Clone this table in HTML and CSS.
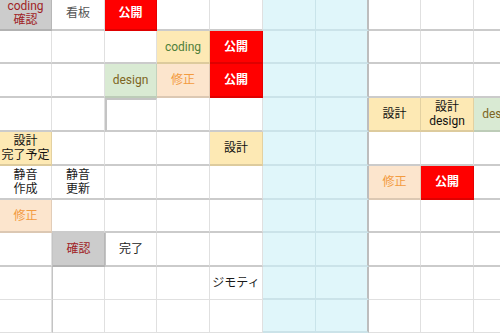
FILE: index.html
```html
<!DOCTYPE html>
<html>
<head>
<meta charset="utf-8">
<link rel="stylesheet" href="styles.css">
</head>
<body>
<div class="sheet">
  <!-- row 0 -->
  <div class="cell c gray red-t">coding<br>確認</div>
  <div class="cell t-gray">看板</div>
  <div class="cell c red">公開</div>
  <div class="cell"></div>
  <div class="cell"></div>
  <div class="cell cy"></div>
  <div class="cell cy cy-end"></div>
  <div class="cell"></div>
  <div class="cell"></div>
  <div class="cell"></div>
  <!-- row 1 -->
  <div class="cell"></div>
  <div class="cell"></div>
  <div class="cell"></div>
  <div class="cell c yellow t-green">coding</div>
  <div class="cell c red">公開</div>
  <div class="cell cy"></div>
  <div class="cell cy cy-end"></div>
  <div class="cell"></div>
  <div class="cell"></div>
  <div class="cell"></div>
  <!-- row 2 -->
  <div class="cell"></div>
  <div class="cell"></div>
  <div class="cell c green t-olive">design</div>
  <div class="cell c peach t-orange">修正</div>
  <div class="cell c red">公開</div>
  <div class="cell cy"></div>
  <div class="cell cy cy-end"></div>
  <div class="cell"></div>
  <div class="cell"></div>
  <div class="cell"></div>
  <!-- row 3 -->
  <div class="cell"></div>
  <div class="cell"></div>
  <div class="cell boxed"></div>
  <div class="cell"></div>
  <div class="cell"></div>
  <div class="cell cy"></div>
  <div class="cell cy cy-end"></div>
  <div class="cell c yellow">設計</div>
  <div class="cell c yellow">設計<br>design</div>
  <div class="cell c green t-olive">design</div>
  <!-- row 4 -->
  <div class="cell c yellow">設計<br>完了予定</div>
  <div class="cell"></div>
  <div class="cell"></div>
  <div class="cell"></div>
  <div class="cell c yellow">設計</div>
  <div class="cell cy"></div>
  <div class="cell cy cy-end"></div>
  <div class="cell"></div>
  <div class="cell"></div>
  <div class="cell"></div>
  <!-- row 5 -->
  <div class="cell">静音<br>作成</div>
  <div class="cell">静音<br>更新</div>
  <div class="cell"></div>
  <div class="cell"></div>
  <div class="cell"></div>
  <div class="cell cy"></div>
  <div class="cell cy cy-end"></div>
  <div class="cell c peach t-orange">修正</div>
  <div class="cell c red">公開</div>
  <div class="cell"></div>
  <!-- row 6 -->
  <div class="cell c peach t-orange">修正</div>
  <div class="cell"></div>
  <div class="cell"></div>
  <div class="cell"></div>
  <div class="cell"></div>
  <div class="cell cy"></div>
  <div class="cell cy cy-end"></div>
  <div class="cell"></div>
  <div class="cell"></div>
  <div class="cell"></div>
  <!-- row 7 -->
  <div class="cell"></div>
  <div class="cell c gray red-t dl">確認</div>
  <div class="cell dl">完了</div>
  <div class="cell"></div>
  <div class="cell"></div>
  <div class="cell cy"></div>
  <div class="cell cy cy-end"></div>
  <div class="cell"></div>
  <div class="cell"></div>
  <div class="cell"></div>
  <!-- row 8 -->
  <div class="cell lb"></div>
  <div class="cell lb dl"></div>
  <div class="cell lb"></div>
  <div class="cell lb"></div>
  <div class="cell lb">ジモティ</div>
  <div class="cell cy"></div>
  <div class="cell cy cy-end"></div>
  <div class="cell lb"></div>
  <div class="cell lb"></div>
  <div class="cell lb"></div>
  <!-- row 9 -->
  <div class="cell lb"></div>
  <div class="cell lb dl"></div>
  <div class="cell lb"></div>
  <div class="cell lb"></div>
  <div class="cell lb"></div>
  <div class="cell cy"></div>
  <div class="cell cy cy-end"></div>
  <div class="cell lb"></div>
  <div class="cell lb"></div>
  <div class="cell lb"></div>
</div>
</body>
</html>
```

FILE: styles.css
```css
html, body {
  margin: 0;
  padding: 0;
  overflow: hidden;
  background: #ffffff;
}

.sheet {
  display: grid;
  grid-template-columns: 52px 53px 52px 53px 53px 53px 53px 52px 53px 53px;
  grid-template-rows: 34px 33px 34px 34px 34px 34px 33px 34px 33px 33px;
  margin-top: -3px;
  width: 527px;
  font-family: Roboto, "Noto Sans CJK JP", "Liberation Sans", sans-serif;
  font-size: 12px;
  line-height: 14px;
  color: #1a1a1a;
}

.cell {
  box-sizing: border-box;
  display: flex;
  align-items: center;
  justify-content: center;
  text-align: center;
  white-space: nowrap;
  border-right: 1px solid #e0e0e0;
  border-bottom: 2px solid #cbcbcb;
  background: #ffffff;
}

.lb {
  border-bottom: 1px solid #e0e0e0;
}

.cy {
  background: #e0f6fa;
  border-right: 1px solid #c9e4ea;
  border-bottom: 2px solid #cbe3e9;
}

.cy-end {
  border-right: 2px solid #bdbdbd;
}

.c {
  border-right-color: rgba(0, 0, 0, 0.1);
  border-bottom-color: rgba(0, 0, 0, 0.12);
}

.gray {
  background: #cccccc;
}

.red {
  background: #ff0000;
  color: #ffffff;
  font-weight: bold;
}

.yellow {
  background: #fde9b4;
  color: #111111;
}

.green {
  background: #d9ead3;
}

.peach {
  background: #fce5cd;
}

.red-t {
  color: #a01f26;
}

.t-gray {
  color: #555555;
}

.t-green {
  color: #4f7f3a;
}

.t-olive {
  color: #7d6522;
}

.t-orange {
  color: #f39b3f;
}

.boxed {
  border-left: 2px solid #c4c4c4;
  border-top: 2px solid #c4c4c4;
}

.dl {
  border-left: 1px solid #c4c4c4;
}
```
